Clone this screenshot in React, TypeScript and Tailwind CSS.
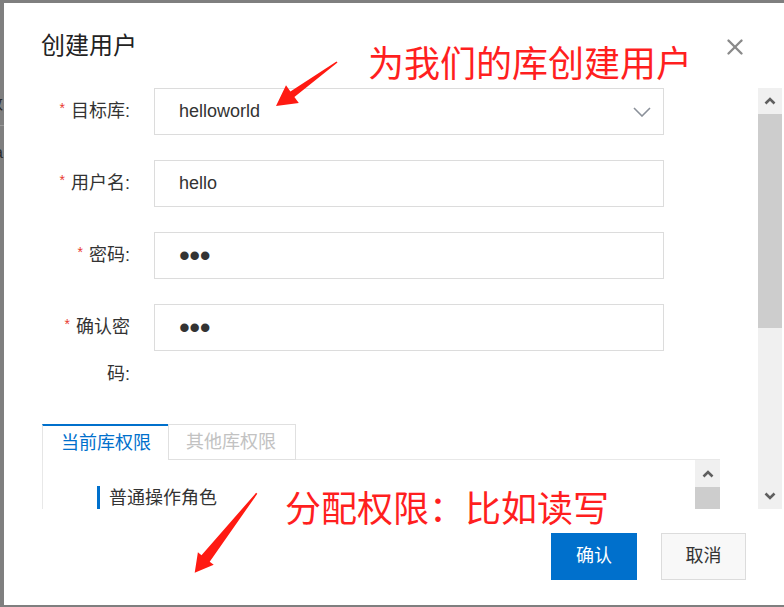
import { X } from 'lucide-react'

type Field = {
  label: string
  value: string
  kind: 'select' | 'text' | 'password'
}

const fields: Field[] = [
  { label: '目标库', value: 'helloworld', kind: 'select' },
  { label: '用户名', value: 'hello', kind: 'text' },
  { label: '密码', value: '•••', kind: 'password' },
  { label: '确认密码', value: '•••', kind: 'password' },
]

function Caret({ down }: { down?: boolean }) {
  return (
    <svg width="12" height="8" viewBox="0 0 12 8">
      <polyline
        points={down ? '1.5,1.5 6,6 10.5,1.5' : '1.5,6.5 6,2 10.5,6.5'}
        fill="none"
        stroke="#5f5f5f"
        strokeWidth="2.6"
      />
    </svg>
  )
}

function FormRow({ field }: { field: Field }) {
  return (
    <div className="mb-[25px] flex items-start pl-[8px]">
      <label className="w-[80px] text-right text-[18px] leading-[47px] text-[#333]">
        <span className="mr-[6px] align-top text-[14px] leading-[40px] text-[#e8392f]">*</span>
        {field.label}:
      </label>
      <div className="ml-[24px] flex h-[47px] w-[510px] items-center justify-between border border-[#dcdcdc] bg-white pl-[24px] pr-[12px]">
        <span
          className={
            field.kind === 'password'
              ? 'text-[31px] leading-none tracking-[-0.5px] text-[#333]'
              : 'text-[18px] text-[#333]'
          }
        >
          {field.value}
        </span>
        {field.kind === 'select' && (
          <svg width="18" height="10" viewBox="0 0 18 10">
            <polyline points="1,1 9,9 17,1" fill="none" stroke="#8a9099" strokeWidth="1.6" />
          </svg>
        )}
      </div>
    </div>
  )
}

export default function App() {
  return (
    <div className="relative h-[607px] w-[784px] overflow-hidden bg-[#7f7f7f] pb-[2px] pl-[4px] pt-[3px] font-['Liberation_Sans','Noto_Sans_CJK_SC',sans-serif]">
      {/* bits of the page behind the mask */}
      <span className="absolute left-[-13px] top-[92px] text-[16px] text-[#2b2b2b]">数</span>
      <div className="absolute left-0 top-[125px] h-px w-[4px] bg-[#9a9a9a]" />
      <span className="absolute left-[-6px] top-[141px] text-[16px] text-[#2b2b2b]">a</span>

      <div className="flex h-full flex-col bg-white">
        <div className="flex h-[85px] shrink-0 items-start justify-between pl-[37px] pr-[36px] pt-[31px]">
          <h1 className="text-[24px] leading-[24px] text-[#222]">创建用户</h1>
          <X className="h-[26px] w-[26px] text-[#8a8a8a]" strokeWidth={2.2} />
        </div>

        <div className="flex h-[421px] shrink-0">
          <div className="flex-1 overflow-hidden px-[38px]">
            {fields.map((f) => (
              <div key={f.label} className="overflow-hidden">
                <FormRow field={f} />
              </div>
            ))}

            <div className="mt-[1px]">
              <div className="flex h-[36px]">
                <div className="flex w-[126px] items-center border-l border-t-2 border-l-[#e5e5e5] border-t-[#0070cc] pl-[18px] text-[18px] text-[#0070cc]">
                  当前库权限
                </div>
                <div className="flex w-[128px] items-center border border-[#e0e0e0] pl-[17px] text-[18px] text-[#c2c2c2]">
                  其他库权限
                </div>
                <div className="flex-1 border-b border-[#e8e8e8]" />
              </div>
              <div className="flex h-[200px] border-l border-[#e8e8e8]">
                <div className="flex-1 pl-[54px] pt-[26px]">
                  <div className="flex items-center border-l-[3px] border-[#0070cc] pl-[9px] text-[18px] leading-[24px] text-[#333]">
                    普通操作角色
                  </div>
                </div>
                <div className="flex w-[25px] flex-col bg-[#f0f0f0]">
                  <div className="flex h-[27px] items-center justify-center">
                    <Caret />
                  </div>
                  <div className="flex-1 bg-[#cdcdcd]" />
                </div>
              </div>
            </div>
          </div>

          <div className="mr-[2px] flex w-[24px] flex-col bg-[#f0f0f0]">
            <div className="flex h-[26px] items-center justify-center">
              <Caret />
            </div>
            <div className="h-[214px] bg-[#cdcdcd]" />
            <div className="flex-1" />
            <div className="flex h-[26px] items-center justify-center">
              <Caret down />
            </div>
          </div>
        </div>

        <div className="flex flex-1 justify-end gap-[24px] pr-[38px] pt-[24px]">
          <button
            type="button"
            className="h-[47px] w-[86px] bg-[#0070cc] text-[18px] text-white"
          >
            确认
          </button>
          <button
            type="button"
            className="h-[47px] w-[85px] border border-[#dcdcdc] bg-[#f8f8f8] text-[18px] text-[#333]"
          >
            取消
          </button>
        </div>
      </div>

      {/* annotations drawn over the screenshot */}
      <p className="absolute left-[368px] top-[47px] text-[36px] leading-[36px] text-[#ff1f1f]">
        为我们的库创建用户
      </p>
      <p className="absolute left-[285px] top-[492px] text-[36px] leading-[36px] text-[#ff1f1f]">
        分配权限：比如读写
      </p>
      <svg className="pointer-events-none absolute left-0 top-0" width="784" height="607">
        <polygon
          points="337.5,62.6 336.5,61.4 290.4,91.4 286,85.3 276,106 298.8,103.1 294.4,97"
          fill="#ff1a12"
        />
        <polygon
          points="257.3,493.8 256.1,492.8 201.5,555.3 197.9,552.3 194.7,572.7 213.7,564.7 209.7,561.7"
          fill="#ff1a12"
        />
      </svg>
    </div>
  )
}
